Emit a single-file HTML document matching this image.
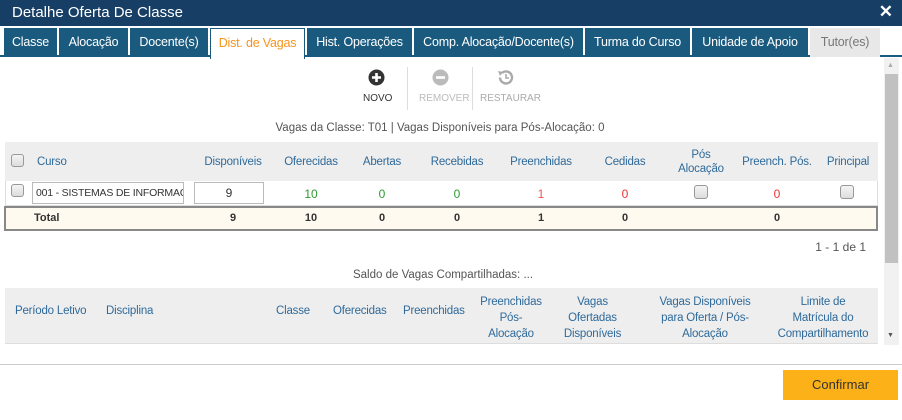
<!DOCTYPE html>
<html><head><meta charset="utf-8"><style>
*{box-sizing:border-box;margin:0;padding:0}
body{width:902px;height:420px;overflow:hidden;background:#fff;font-family:"Liberation Sans",sans-serif;font-size:12px;color:#333;position:relative}
.a{position:absolute}
.title{left:0;top:0;width:902px;height:26px;background:#173f66;color:#fff;font-size:15px;padding:4px 12px}
.tabbar{left:0;top:26px;width:902px;height:31px;background:#fff;border-bottom:2px solid #1a5a7e}
.tab{position:absolute;top:2px;height:29px;background:#1a5a7e;color:#fff;font-size:12.5px;letter-spacing:-0.2px;text-align:center;line-height:29px;white-space:nowrap}
.th{color:#2f6a9a;font-size:11.5px;letter-spacing:-0.2px;text-align:center;line-height:14px}
.c{text-align:center}
.cb{position:absolute;width:13px;height:13px;border:1px solid #999;border-radius:3px;background:linear-gradient(#f4f4f4,#ddd)}
</style></head><body>
<div class="a title">Detalhe Oferta De Classe<span style="position:absolute;right:9px;top:2px;font-weight:bold;font-size:17px">✕</span></div>
<div class="a tabbar">
<div class="tab" style="left:4px;width:53px">Classe</div>
<div class="tab" style="left:59px;width:69px">Alocação</div>
<div class="tab" style="left:130px;width:78px">Docente(s)</div>
<div class="tab" style="left:210px;width:95px;background:#fff;color:#f7941d;border:1px solid #1a5a7e;border-bottom:none;height:31px">Dist. de Vagas</div>
<div class="tab" style="left:307px;width:105px">Hist. Operações</div>
<div class="tab" style="left:414px;width:169px">Comp. Alocação/Docente(s)</div>
<div class="tab" style="left:585px;width:105px">Turma do Curso</div>
<div class="tab" style="left:692px;width:116px">Unidade de Apoio</div>
<div class="tab" style="left:810px;width:70px;background:#e8e8e8;color:#777">Tutor(es)</div>
</div>
<div class="a" style="left:884px;top:58px;width:15px;height:287px;background:#f1f1f1"></div>
<div class="a" style="left:885px;top:74px;width:13px;height:189px;background:#c1c1c1"></div>
<div class="a" style="left:887px;top:62px;font-size:7px;color:#aaa">▲</div>
<div class="a" style="left:887px;top:332px;font-size:7px;color:#555">▼</div>
<svg class="a" style="left:368px;top:69px" width="17" height="17"><circle cx="8.5" cy="8.5" r="8" fill="#333"/><path d="M8.5 4v9M4 8.5h9" stroke="#fff" stroke-width="2.6"/></svg>
<div class="a" style="left:363px;top:93px;font-size:10px;color:#333">NOVO</div>
<div class="a" style="left:407px;top:67px;width:1px;height:43px;background:#ddd"></div>
<svg class="a" style="left:432px;top:69px" width="17" height="17"><circle cx="8.5" cy="8.5" r="8" fill="#bbb"/><path d="M4 8.5h9" stroke="#fff" stroke-width="2.6"/></svg>
<div class="a" style="left:419px;top:93px;font-size:10px;color:#bbb">REMOVER</div>
<div class="a" style="left:472px;top:67px;width:1px;height:43px;background:#ddd"></div>
<svg class="a" style="left:496px;top:69px" width="18" height="17"><path d="M4 8.5A6 6 0 1 0 6 4" fill="none" stroke="#aaa" stroke-width="2.4"/><path d="M2 2l5 1-3 4z" fill="#aaa"/><path d="M10 5v4h3" fill="none" stroke="#aaa" stroke-width="1.6"/></svg>
<div class="a" style="left:480px;top:93px;font-size:10px;color:#aaa">RESTAURAR</div>
<div class="a" style="left:0;width:880px;top:122px;text-align:center;color:#555;font-size:11.5px">Vagas da Classe: T01 | Vagas Disponíveis para Pós-Alocação: 0</div>
<div class="a" style="left:5px;top:142px;width:873px;height:39px;background:#eee"></div>
<div class="cb" style="left:11px;top:154px"></div>
<div class="a th" style="left:37px;top:155px">Curso</div>
<div class="a th" style="left:193px;width:80px;top:155px">Disponíveis</div>
<div class="a th" style="left:273px;width:76px;top:155px">Oferecidas</div>
<div class="a th" style="left:349px;width:66px;top:155px">Abertas</div>
<div class="a th" style="left:415px;width:84px;top:155px">Recebidas</div>
<div class="a th" style="left:499px;width:84px;top:155px">Preenchidas</div>
<div class="a th" style="left:583px;width:84px;top:155px">Cedidas</div>
<div class="a th" style="left:667px;width:68px;top:148px">Pós<br>Alocação</div>
<div class="a th" style="left:735px;width:84px;top:155px">Preench. Pós.</div>
<div class="a th" style="left:819px;width:58px;top:155px">Principal</div>
<div class="a" style="left:5px;top:181px;width:873px;height:25px;border-bottom:1px solid #ddd;border-left:1px solid #ddd;border-right:1px solid #ddd"></div>
<div class="cb" style="left:11px;top:184px"></div>
<div class="a" style="left:32px;top:182px;width:152px;height:22px;border:1px solid #bbb;font-size:10.5px;letter-spacing:-0.2px;padding:4px 3px;white-space:nowrap;overflow:hidden">001 - SISTEMAS DE INFORMAÇ</div>
<div class="a" style="left:194px;top:182px;width:70px;height:22px;border:1px solid #bbb;text-align:center;line-height:20px">9</div>
<div class="a c" style="left:273px;width:76px;top:187px;color:#2e9a2e">10</div>
<div class="a c" style="left:349px;width:66px;top:187px;color:#2e9a2e">0</div>
<div class="a c" style="left:415px;width:84px;top:187px;color:#2e9a2e">0</div>
<div class="a c" style="left:499px;width:84px;top:187px;color:#e55">1</div>
<div class="a c" style="left:583px;width:84px;top:187px;color:#e33">0</div>
<div class="cb" style="left:694px;top:185px;width:14px;height:14px"></div>
<div class="a c" style="left:735px;width:84px;top:187px;color:#e33">0</div>
<div class="cb" style="left:840px;top:185px;width:14px;height:14px"></div>
<div class="a" style="left:4px;top:206px;width:874px;height:25px;background:#fffaef;border:2px solid #888"></div>
<div class="a" style="left:34px;top:212px;font-weight:bold;font-size:11px">Total</div>
<div class="a c" style="left:193px;width:80px;top:212px;font-weight:bold;font-size:11px">9</div>
<div class="a c" style="left:273px;width:76px;top:212px;font-weight:bold;font-size:11px">10</div>
<div class="a c" style="left:349px;width:66px;top:212px;font-weight:bold;font-size:11px">0</div>
<div class="a c" style="left:415px;width:84px;top:212px;font-weight:bold;font-size:11px">0</div>
<div class="a c" style="left:499px;width:84px;top:212px;font-weight:bold;font-size:11px">1</div>
<div class="a c" style="left:583px;width:84px;top:212px;font-weight:bold;font-size:11px">0</div>
<div class="a c" style="left:735px;width:84px;top:212px;font-weight:bold;font-size:11px">0</div>
<div class="a" style="right:36px;top:240px;color:#555">1 - 1 de 1</div>
<div class="a" style="left:0;width:886px;top:269px;text-align:center;color:#555;font-size:11.5px">Saldo de Vagas Compartilhadas: ...</div>
<div class="a" style="left:5px;top:288px;width:873px;height:56px;background:#eee;border-bottom:1px solid #ddd"></div>
<div class="a th" style="left:15px;top:304px">Período Letivo</div>
<div class="a th" style="left:106px;top:304px">Disciplina</div>
<div class="a th" style="left:276px;top:304px">Classe</div>
<div class="a th" style="left:333px;top:304px">Oferecidas</div>
<div class="a th" style="left:403px;top:304px">Preenchidas</div>
<div class="a th" style="left:472px;width:78px;top:294px;line-height:16px">Preenchidas<br>Pós-<br>Alocação</div>
<div class="a th" style="left:555px;width:75px;top:294px;line-height:16px">Vagas<br>Ofertadas<br>Disponíveis</div>
<div class="a th" style="left:640px;width:130px;top:294px;line-height:16px">Vagas Disponíveis<br>para Oferta / Pós-<br>Alocação</div>
<div class="a th" style="left:768px;width:110px;top:294px;line-height:16px">Limite de<br>Matrícula do<br>Compartilhamento</div>
<div class="a" style="left:0;top:364px;width:902px;height:1px;background:#ccc"></div>
<div class="a" style="left:783px;top:370px;width:115px;height:30px;background:#fbb117;color:#333;font-size:13px;text-align:center;line-height:30px">Confirmar</div>
</body></html>
